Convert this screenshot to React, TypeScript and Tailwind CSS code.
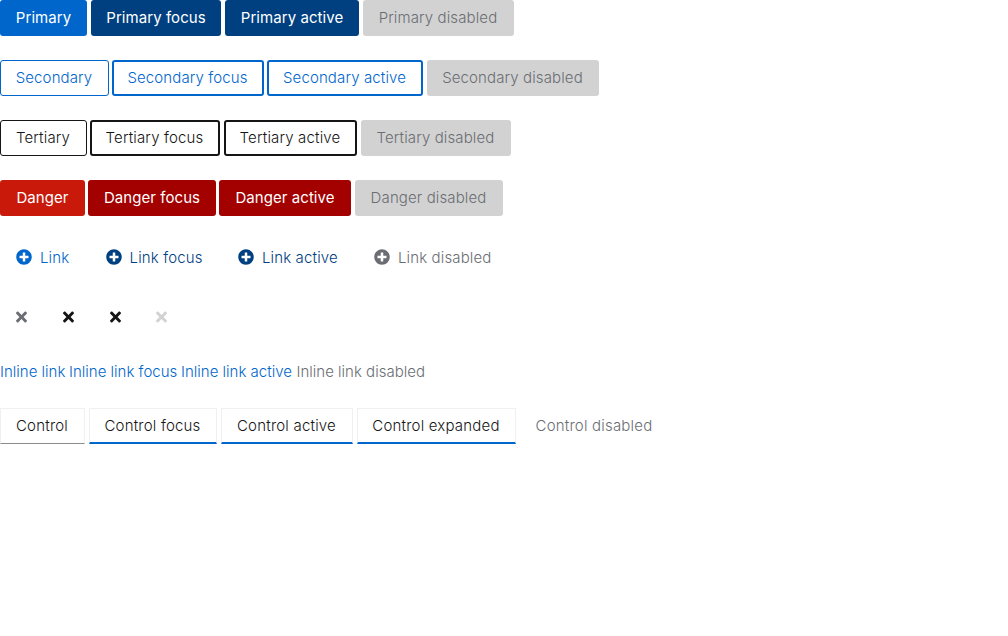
import type { ReactNode } from "react";
import { FaPlusCircle, FaTimes } from "react-icons/fa";

type ButtonProps = { className: string; disabled?: boolean; children: ReactNode };

function Button({ className, disabled, children }: ButtonProps) {
  return (
    <button
      type="button"
      disabled={disabled}
      className={`flex h-9 shrink-0 items-center justify-center whitespace-nowrap ${className}`}
    >
      {children}
    </button>
  );
}

function Row({ children }: { children: ReactNode }) {
  return <div className="flex h-9">{children}</div>;
}

const filled = "rounded-[3px] font-normal tracking-[0.06px] text-white";
const disabledFill = "rounded-[3px] bg-[#d2d2d2] pr-px text-[#6a6e73]";
const secondary = "rounded-[3px] border-[#0066cc] pr-px text-[#0066cc]";
const tertiary = "rounded-[3px] border-[#151515] pr-px tracking-[0.16px] text-[#151515]";
const control = "border border-[#f0f0f0] pr-px tracking-[0.2px] text-[#151515]";
const controlOn =
  "border border-b-2 border-[#f0f0f0] border-b-[#0066cc] pt-px pr-px tracking-[0.2px] text-[#151515]";
const link = "justify-start gap-2 pl-4 tracking-[0.14px]";

export default function App() {
  return (
    <main className="flex min-h-screen flex-col gap-6 bg-white font-['Inter',sans-serif] text-[15px] leading-6 font-light tracking-[0.12px]">
      <Row>
        <Button className={`${filled} w-[87px] bg-[#0066cc]`}>Primary</Button>
        <Button className={`${filled} ml-1 w-[130px] bg-[#004080]`}>Primary focus</Button>
        <Button className={`${filled} ml-1 w-[134px] bg-[#004080]`}>Primary active</Button>
        <Button disabled className={`${disabledFill} ml-1 w-[151px]`}>Primary disabled</Button>
      </Row>
      <Row>
        <Button className={`${secondary} w-[109px] border`}>Secondary</Button>
        <Button className={`${secondary} ml-[3px] w-[152px] border-2`}>Secondary focus</Button>
        <Button className={`${secondary} ml-[3px] w-[156px] border-2`}>Secondary active</Button>
        <Button disabled className={`${disabledFill} ml-1 w-[172px]`}>Secondary disabled</Button>
      </Row>
      <Row>
        <Button className={`${tertiary} w-[87px] border`}>Tertiary</Button>
        <Button className={`${tertiary} ml-[3px] w-[130px] border-2`}>Tertiary focus</Button>
        <Button className={`${tertiary} ml-1 w-[133px] border-2`}>Tertiary active</Button>
        <Button disabled className={`${disabledFill} ml-1 w-[150px]`}>Tertiary disabled</Button>
      </Row>
      <Row>
        <Button className={`${filled} w-[85px] bg-[#c9190b]`}>Danger</Button>
        <Button className={`${filled} ml-[3px] w-[128px] bg-[#a30000]`}>Danger focus</Button>
        <Button className={`${filled} ml-[3px] w-[132px] bg-[#a30000]`}>Danger active</Button>
        <Button disabled className={`${disabledFill} ml-1 w-[148px]`}>Danger disabled</Button>
      </Row>
      <Row>
        <Button className={`${link} w-[86px] text-[#0066cc]`}>
          <FaPlusCircle className="-mt-0.5 size-4" />Link
        </Button>
        <Button className={`${link} ml-[3.6px] w-[128.4px] text-[#004080]`}>
          <FaPlusCircle className="-mt-0.5 size-4" />Link focus
        </Button>
        <Button className={`${link} ml-1 w-[132px] text-[#004080]`}>
          <FaPlusCircle className="-mt-0.5 size-4" />Link active
        </Button>
        <Button disabled className={`${link} ml-1 w-[149px] text-[#6a6e73]`}>
          <FaPlusCircle className="-mt-0.5 size-4" />Link disabled
        </Button>
      </Row>
      <div className="flex h-9 gap-[3.8px]">
        <Button className="w-[43px] text-[#6a6e73]"><FaTimes className="-mt-0.5 h-4 w-[11px]" /></Button>
        <Button className="w-[43px] text-[#151515]"><FaTimes className="-mt-0.5 h-4 w-[11px]" /></Button>
        <Button className="w-[43px] text-[#151515]"><FaTimes className="-mt-0.5 h-4 w-[11px]" /></Button>
        <Button disabled className="w-[43px] text-[#d2d2d2]"><FaTimes className="-mt-0.5 h-4 w-[11px]" /></Button>
      </div>
      <div className="flex h-6 items-center whitespace-nowrap tracking-[0.01px] text-[#0066cc]">
        <button type="button" className="w-[69px] text-left">Inline link</button>
        <button type="button" className="w-[112px] text-left">Inline link focus</button>
        <button type="button" className="w-[115.5px] text-left">Inline link active</button>
        <button type="button" disabled className="text-[#6a6e73]">Inline link disabled</button>
      </div>
      <Row>
        <Button className={`${control} w-[85px] border-b-[#8a8d90]`}>Control</Button>
        <Button className={`${controlOn} ml-1 w-32`}>Control focus</Button>
        <Button className={`${controlOn} ml-1 w-[132px]`}>Control active</Button>
        <Button className={`${controlOn} ml-1 w-[159px]`}>Control expanded</Button>
        <Button disabled className="ml-1 w-[149px] pr-px tracking-[0.2px] text-[#6a6e73]">Control disabled</Button>
      </Row>
    </main>
  );
}
